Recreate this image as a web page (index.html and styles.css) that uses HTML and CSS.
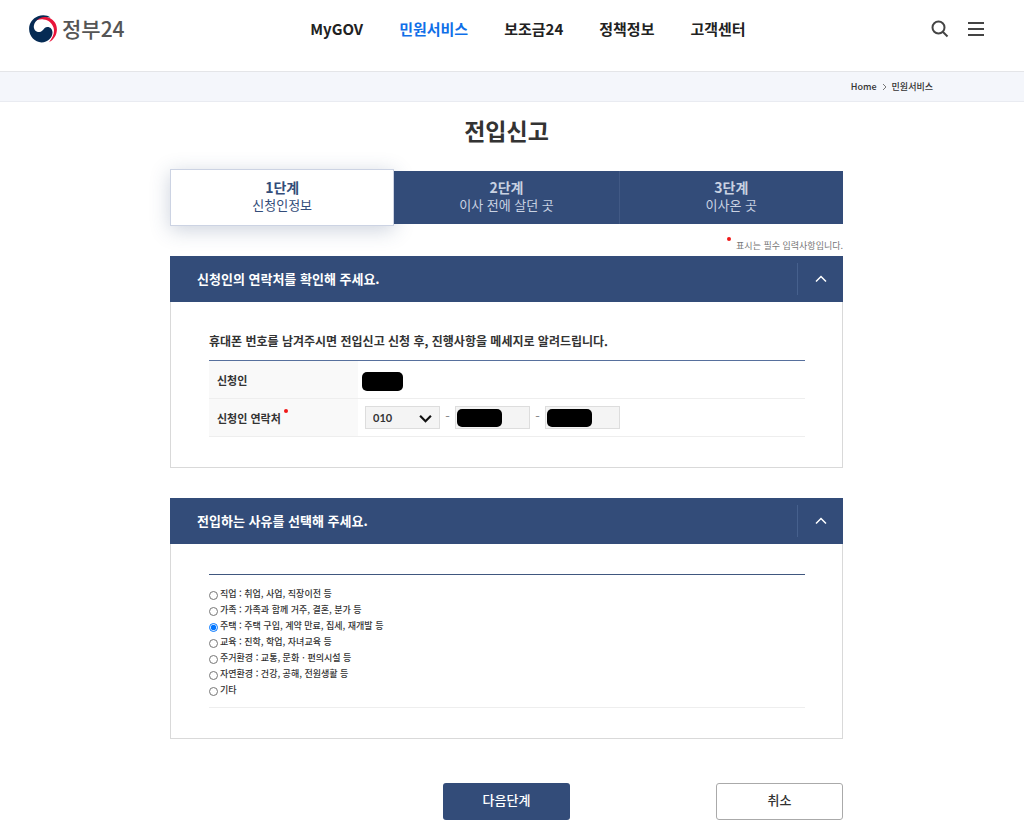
FILE: index.html
```html
<!DOCTYPE html>
<html lang="ko">
<head>
<meta charset="utf-8">
<meta name="viewport" content="width=device-width, initial-scale=1">
<title>전입신고 - 정부24</title>
<link rel="stylesheet" href="styles.css">
</head>
<body>
<header class="site-header">
  <a class="logo" href="#">
    <svg class="logo-mark" viewBox="0 0 28 28" aria-hidden="true">
      <path fill="#e8153a" d="M5 7C7.500 2.500 13 .6 18 2C24 3.500 28.200 8.500 27.900 15C27.600 20.500 24.500 25 20 27.300C24 22.500 26 17.500 24.500 12.500C23 7.800 19.500 5 14.500 4.400C10.500 4 7.500 5 5 7Z"/>
      <path fill="#052b54" d="M21.500 2.500C18.500.2 13.500-.4 9 1.200C3.500 3.200 0 8.500.1 14C.2 21.500 6 27.200 12.500 27.400C19 27.400 23.500 22.500 23.500 17.500C23.500 14 21 11.800 18.300 12C14.500 12.200 14.500 16.500 10.500 17C7.500 17.200 5 15.200 4.800 12C4.700 7.500 9 3 13.500 2.200C16.500 1.700 19 1.800 21.500 2.500Z"/>
    </svg>
    <span>정부24</span>
  </a>
  <nav class="main-nav" aria-label="주 메뉴">
    <a href="#">MyGOV</a>
    <a class="current" href="#">민원서비스</a>
    <a href="#">보조금24</a>
    <a href="#">정책정보</a>
    <a href="#">고객센터</a>
  </nav>
  <div class="tools">
    <button type="button" aria-label="검색">
      <svg viewBox="0 0 18 18"><circle cx="7.500" cy="7.500" r="6"/><path d="M12 12l4.500 4.500"/></svg>
    </button>
    <button type="button" aria-label="전체메뉴">
      <svg viewBox="0 0 18 18"><path d="M1 3h16M1 9h16M1 15h16"/></svg>
    </button>
  </div>
</header>
<nav class="breadcrumb" aria-label="현재 위치">
  <a href="#">Home</a>
  <svg viewBox="0 0 5 8" aria-hidden="true"><path d="M1 1l3 3-3 3"/></svg>
  <a href="#">민원서비스</a>
</nav>
<main class="page">
  <h1>전입신고</h1>
  <ol class="steps">
    <li class="step active" aria-current="step"><strong>1단계</strong><span>신청인정보</span></li>
    <li class="step"><strong>2단계</strong><span>이사 전에 살던 곳</span></li>
    <li class="step"><strong>3단계</strong><span>이사온 곳</span></li>
  </ol>
  <p class="note"><i class="dot"></i>표시는 필수 입력사항입니다.</p>

  <form>
    <section class="card">
      <div class="card-head">
        <h2>신청인의 연락처를 확인해 주세요.</h2>
        <button type="button" aria-label="접기"><svg viewBox="0 0 12 8"><path d="M1 6.500l5-5 5 5"/></svg></button>
      </div>
      <div class="card-body">
        <h3>휴대폰 번호를 남겨주시면 전입신고 신청 후, 진행사항을 메세지로 알려드립니다.</h3>
        <table class="info">
          <tr>
            <th scope="row">신청인</th>
            <td><span class="mask name"></span></td>
          </tr>
          <tr>
            <th scope="row"><label for="tel1">신청인 연락처</label><i class="dot"></i></th>
            <td>
              <div class="phone">
                <span class="field">
                  <select id="tel1"><option>010</option><option>011</option><option>016</option></select>
                  <svg class="arrow" viewBox="0 0 12 8" aria-hidden="true"><path d="M1 1.500l5 5 5-5"/></svg>
                </span>
                <span class="dash">-</span>
                <span class="field"><input type="text" aria-label="전화번호 가운데 자리"><span class="mask over"></span></span>
                <span class="dash">-</span>
                <span class="field"><input type="text" aria-label="전화번호 끝자리"><span class="mask over"></span></span>
              </div>
            </td>
          </tr>
        </table>
      </div>
    </section>

    <section class="card">
      <div class="card-head">
        <h2>전입하는 사유를 선택해 주세요.</h2>
        <button type="button" aria-label="접기"><svg viewBox="0 0 12 8"><path d="M1 6.500l5-5 5 5"/></svg></button>
      </div>
      <div class="card-body">
        <div class="reasons" role="radiogroup" aria-label="전입 사유">
          <label><input type="radio" name="reason">직업 : 취업, 사업, 직장이전 등</label>
          <label><input type="radio" name="reason">가족 : 가족과 함께 거주, 결혼, 분가 등</label>
          <label><input type="radio" name="reason" checked>주택 : 주택 구입, 계약 만료, 집세, 재개발 등</label>
          <label><input type="radio" name="reason">교육 : 진학, 학업, 자녀교육 등</label>
          <label><input type="radio" name="reason">주거환경 : 교통, 문화ㆍ편의시설 등</label>
          <label><input type="radio" name="reason">자연환경 : 건강, 공해, 전원생활 등</label>
          <label><input type="radio" name="reason">기타</label>
        </div>
      </div>
    </section>

    <div class="actions">
      <button class="btn primary" type="submit">다음단계</button>
      <button class="btn cancel" type="button">취소</button>
    </div>
  </form>
</main>
</body>
</html>
```
FILE: styles.css
```css
* { box-sizing: border-box; }

body {
  margin: 0;
  background: #fff;
  color: #333;
  font-family: "Noto Sans CJK KR", "Noto Sans", sans-serif;
  font-size: 13px;
  line-height: 18px;
}

h1, h2, h3, p, ol { margin: 0; padding: 0; }
a { color: inherit; text-decoration: none; }
button { padding: 0; border: 0; background: none; font: inherit; cursor: pointer; }
svg { display: block; fill: none; }

.site-header {
  display: grid;
  grid-template-columns: 1fr auto 1fr;
  align-items: center;
  padding: 14px 39px 27px 29px;
}
.logo {
  display: flex;
  align-items: center;
  gap: 5px;
  color: #555;
  font-size: 21px;
  font-weight: 500;
  line-height: 28px;
}
.logo span { padding-bottom: 2px; }
.logo-mark { width: 28px; height: 28px; }
.main-nav {
  display: flex;
  gap: 36px;
  margin-left: 42px;
  color: #222;
  font-size: 15px;
  font-weight: 700;
}
.main-nav .current { color: #0f6fe8; }
.tools { display: flex; justify-content: flex-end; gap: 18px; }
.tools svg { width: 18px; height: 18px; stroke: #444; stroke-width: 2; }

.breadcrumb {
  display: flex;
  align-items: center;
  justify-content: flex-end;
  gap: 5px;
  padding: 6px 91px 5px 0;
  border-top: 1px solid #e4e5e8;
  border-bottom: 1px solid #e9ebf1;
  background: #f4f6fb;
  font-size: 9px;
  font-weight: 500;
}
.breadcrumb svg { width: 5px; height: 8px; stroke: #777; }

.page {
  margin: 0 181px 0 170px;
  padding-top: 11px;
}
h1 { color: #333; font-size: 23px; font-weight: 700; line-height: 34px; text-align: center; }

.steps {
  display: grid;
  grid-template-columns: repeat(3, 1fr);
  margin-top: 24px;
  list-style: none;
}
.step {
  display: flex;
  flex-direction: column;
  align-items: center;
  justify-content: center;
  min-height: 53px;
  padding-bottom: 3px;
  background: #334c79;
  color: #c9d2e2;
  line-height: 18px;
}
.step strong { font-size: 14px; }
.step + .step + .step { border-left: 1px solid #415985; }
.step.active {
  margin: -2px 0;
  border: 1px solid #ccd3e3;
  background: #fff;
  color: #334c79;
  box-shadow: 0 4px 20px rgba(51, 76, 121, .25);
}

.note {
  display: flex;
  justify-content: flex-end;
  gap: 5px;
  margin-top: 13px;
  color: #777;
  font-size: 9px;
}
.dot { width: 4px; height: 4px; border-radius: 50%; background: #f01818; }

.card { margin: 1px 0 30px; border: 1px solid #d9d9d9; border-top: 0; }
.card-head {
  display: flex;
  align-items: center;
  justify-content: space-between;
  margin: 0 -1px;
  padding: 7px 0 7px 27px;
  background: #334c79;
  color: #fff;
}
h2 { font-size: 13px; font-weight: 700; }
.card-head button { padding: 12px 16px 12px 17px; border-left: 1px solid #46608d; }
.card-head svg { width: 12px; height: 8px; stroke: #fff; stroke-width: 1.500; }
.card-body { padding: 30px 37px 30px 38px; }
h3 { padding-bottom: 10px; font-size: 12px; font-weight: 700; }

.info {
  width: 100%;
  border-collapse: collapse;
  border-top: 1px solid #57709d;
}
.info tr { border-bottom: 1px solid #eee; }
.info tr:first-child { border-top: 1px solid #57709d; }
.info th {
  width: 25%;
  height: 38px;
  padding: 0 8px;
  background: #f9f9f9;
  font-size: 11px;
  font-weight: 700;
  text-align: left;
}
.info th .dot { display: inline-block; margin-left: 3px; vertical-align: 10px; }
.info td { padding: 0 4px; }
.mask { display: block; border-radius: 5px; background: #000; }
.mask.name { width: 41px; height: 19px; margin-top: 4px; }
.phone { display: flex; align-items: center; padding-left: 3px; }
.field { position: relative; display: block; width: 75px; }
.field select, .field input {
  display: block;
  width: 100%;
  height: 23px;
  padding: 0 7px;
  border: 1px solid #ddd;
  border-radius: 0;
  appearance: none;
  background: #f4f4f4;
  color: #333;
  font: 700 11px Lato, sans-serif;
}
.arrow {
  position: absolute;
  top: 8px;
  right: 8px;
  width: 13px;
  height: 9px;
  stroke: #111;
  stroke-width: 2;
  pointer-events: none;
}
.mask.over { position: absolute; top: 3px; left: 2px; width: 45px; height: 18px; }
.dash { width: 15px; padding-bottom: 3px; color: #888; text-align: center; }

.reasons {
  display: flex;
  flex-direction: column;
  align-items: flex-start;
  padding: 11px 0 9px;
  border-top: 1px solid #40577f;
  border-bottom: 1px solid #eee;
}
.reasons label {
  display: flex;
  align-items: center;
  gap: 2px;
  font-size: 9px;
  font-weight: 500;
  line-height: 16px;
}
.reasons input { width: 9px; height: 9px; margin: 2px 0 0; }

.actions {
  display: grid;
  grid-template-columns: 1fr 127px 1fr;
  padding-top: 14px;
}
.btn { height: 37px; padding-bottom: 3px; border-radius: 3px; font-size: 13px; font-weight: 500; }
.btn.primary { grid-column: 2; background: #334c79; color: #fff; }
.btn.cancel { width: 127px; justify-self: end; border: 1px solid #aaa; color: #333; }
```
